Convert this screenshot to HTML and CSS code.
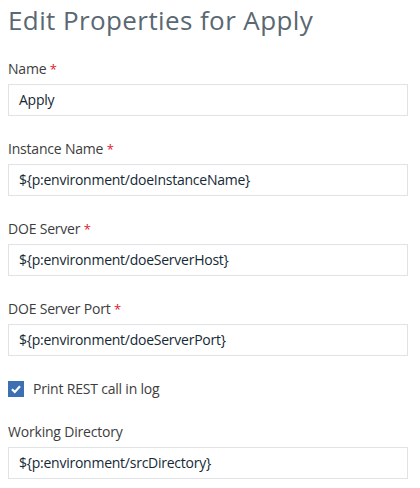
FILE: index.html
```html
<!DOCTYPE html>
<html>
<head>
<meta charset="utf-8">
<link rel="stylesheet" href="styles.css">
</head>
<body>
<div class="page">
  <h1 class="title">Edit Properties for Apply</h1>
  <div class="field">
    <label class="label">Name <span class="req">*</span></label>
    <div class="input">Apply</div>
  </div>
  <div class="field">
    <label class="label">Instance Name <span class="req">*</span></label>
    <div class="input">${p:environment/doeInstanceName}</div>
  </div>
  <div class="field">
    <label class="label">DOE Server <span class="req">*</span></label>
    <div class="input">${p:environment/doeServerHost}</div>
  </div>
  <div class="field">
    <label class="label">DOE Server Port <span class="req">*</span></label>
    <div class="input">${p:environment/doeServerPort}</div>
  </div>
  <div class="check-row">
    <span class="checkbox"><svg width="16" height="16" viewBox="0 0 16 16"><path d="M4 8.2 L6.8 11 L12 5.2" fill="none" stroke="#fff" stroke-width="2.2"/></svg></span>
    <span class="check-label">Print REST call in log</span>
  </div>
  <div class="field">
    <label class="label">Working Directory</label>
    <div class="input">${p:environment/srcDirectory}</div>
  </div>
</div>
</body>
</html>
```
FILE: styles.css
```css
* { box-sizing: border-box; }
html, body { margin: 0; padding: 0; background: #fff; }
body { font-family: "Open Sans", "Noto Sans", sans-serif; color: #152935; }
.page { padding: 0 12px 0 8px; }
.title {
  margin: 0;
  height: 59px;
  padding-top: 4px;
  font-size: 26px;
  line-height: 32px;
  font-weight: 400;
  letter-spacing: 0.4px;
  color: #5a6872;
}
.field { display: flex; flex-direction: column; gap: 5px; margin-bottom: 23px; }
.label { font-size: 14px; line-height: 20px; height: 20px; color: #3d3d3d; letter-spacing: -0.2px; }
.req { color: #e0182d; font-size: 13px; }
.input {
  width: 400px;
  height: 32px;
  border: 1px solid #dfe3e6;
  padding: 0 10px;
  font-size: 14px;
  line-height: 30px;
  letter-spacing: -0.25px;
  color: #152935;
}
.check-row { display: flex; align-items: center; gap: 9px; height: 20px; margin-top: 3px; margin-bottom: 23px; }
.checkbox { width: 16px; height: 16px; background: #3d70b2; display: flex; }
.check-label { font-size: 14px; line-height: 20px; color: #3d3d3d; letter-spacing: -0.2px; }
```
